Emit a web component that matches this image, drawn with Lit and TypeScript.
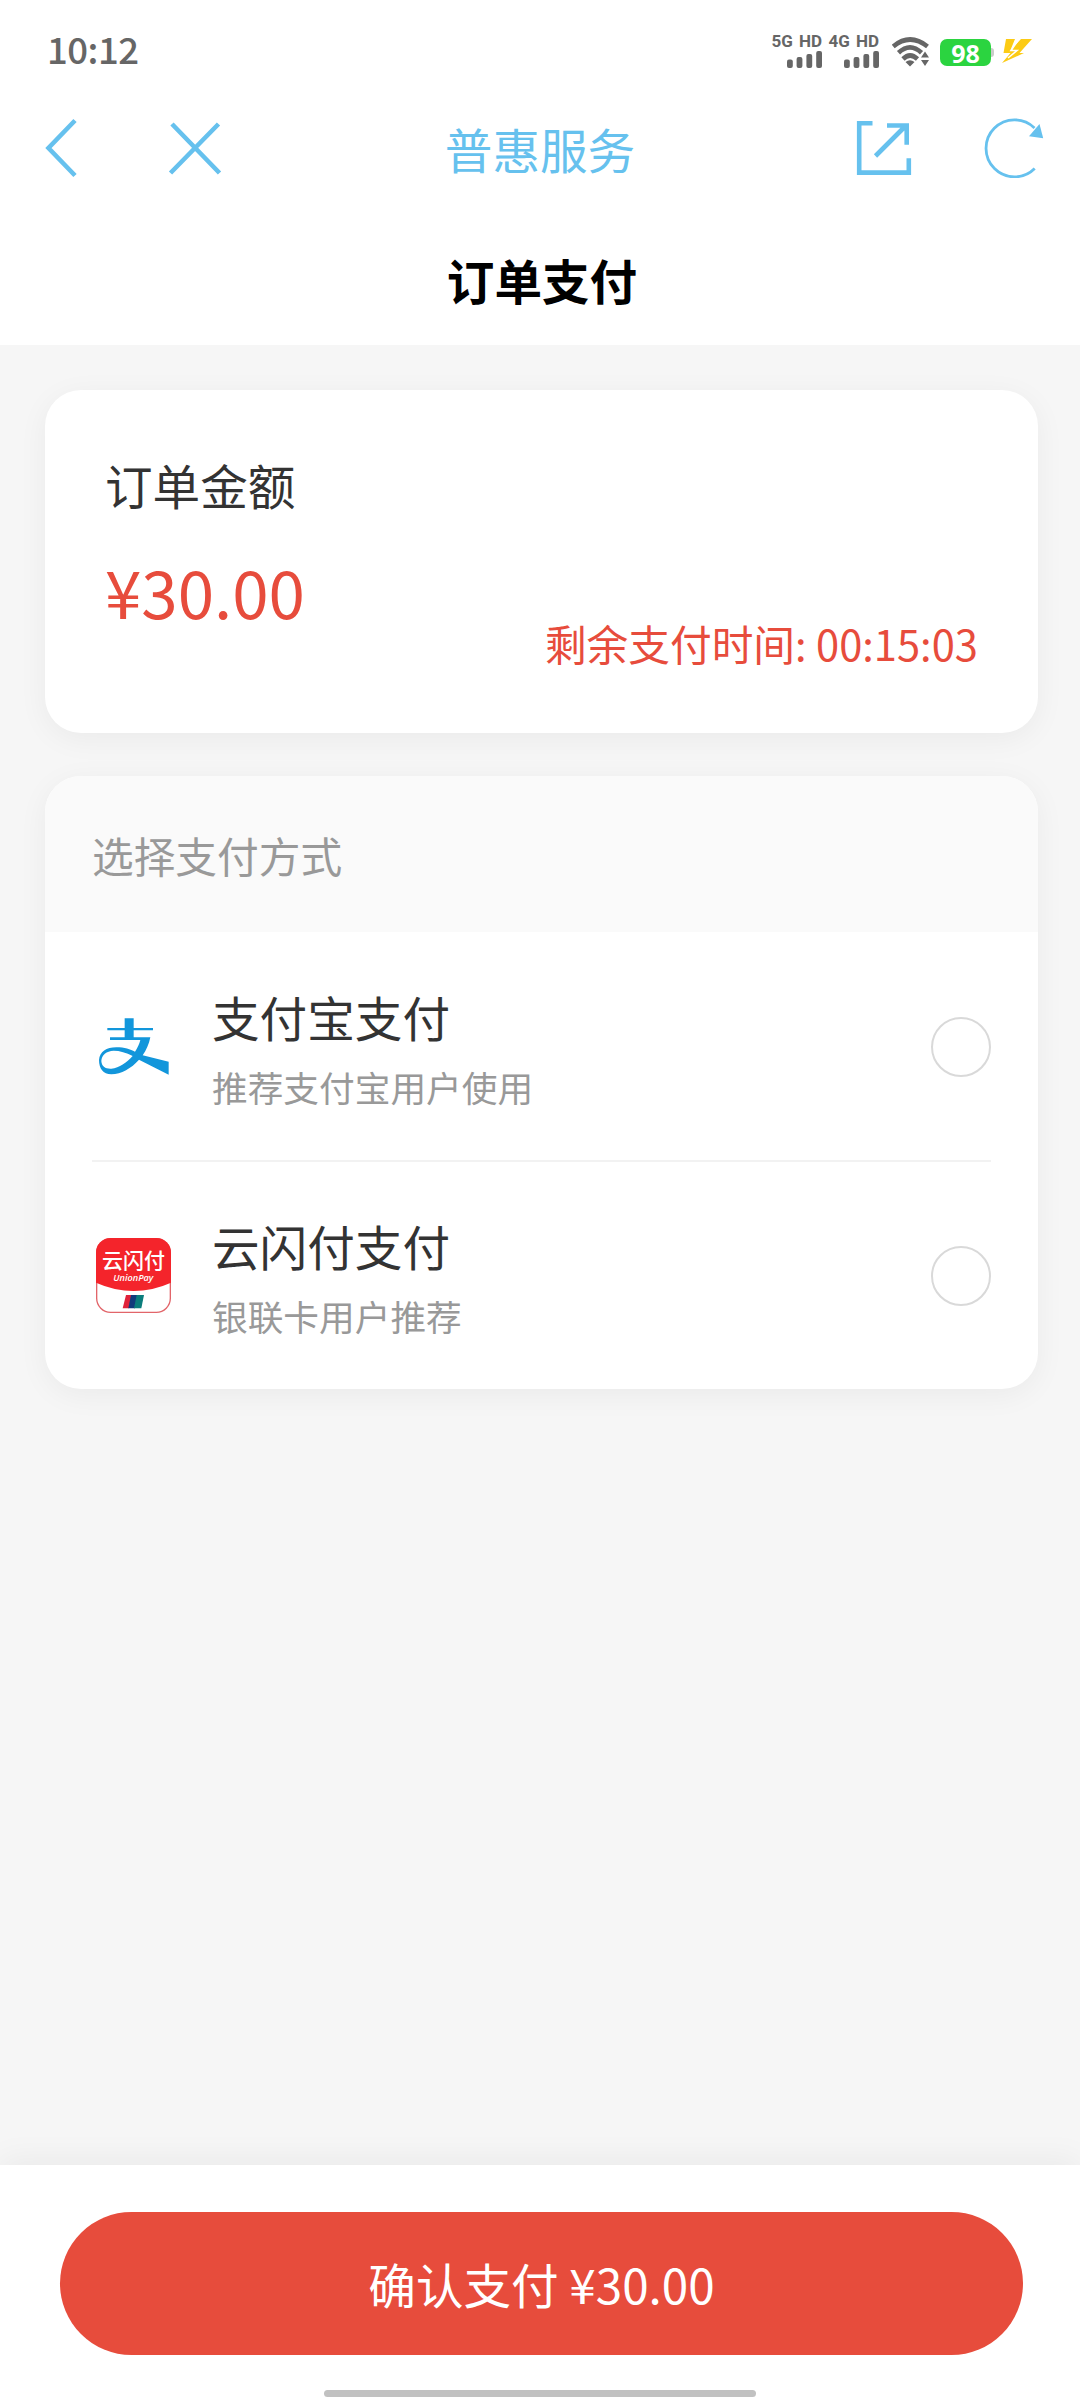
import { LitElement, html, css, svg } from "lit";
import { customElement, property } from "lit/decorators.js";

const signal = svg`
  <rect x="0" y="8.5" width="5.8" height="8.500" rx="2"/>
  <rect x="9.6" y="6" width="5.8" height="11" rx="2"/>
  <rect x="19.4" y="3" width="5.8" height="14" rx="2"/>
  <rect x="29.2" y="0" width="5.8" height="17" rx="2"/>`;

const alipayLogo = html`<svg width="75" height="75" viewBox="109 147 225 225">
  <path fill="#1296db" fill-rule="evenodd" d="M195 175H222V204H280V211H222V232H272C268 252 260 270 249 286L327 305V344L238 299C215 325 185 342 155 343C130 343 118 325 118 300C120 275 140 262 170 262C195 262 212 268 226 275C234 263 239 252 242 240H151V232H195V211H143V204H195ZM219 288C200 278 180 272 162 272C140 273 126 285 125 303C126 320 138 327 155 326C180 324 200 308 219 288Z"/>
</svg>`;

const unionLogo = html`<svg width="75" height="75" viewBox="109 174 225 225">
  <defs><clipPath id="tile"><rect x="109" y="174" width="225" height="225" rx="44"/></clipPath></defs>
  <rect x="111" y="176" width="221" height="221" rx="42" fill="#fff" stroke="#e2656a" stroke-width="4"/>
  <path clip-path="url(#tile)" fill="#f4242b" d="M109 174H334V308Q222 358 109 308Z"/>
  <text x="221.5" y="265" text-anchor="middle" font-family="'Noto Sans CJK SC', sans-serif" font-size="63" font-weight="500" fill="#fff">云闪付</text>
  <text x="221" y="304" text-anchor="middle" font-family="'Open Sans', sans-serif" font-size="27" font-style="italic" font-weight="600" textLength="120" lengthAdjust="spacingAndGlyphs" fill="#fff">UnionPay</text>
  <path fill="#e0223a" d="M199 345H216L208 385H189Z"/>
  <path fill="#123a7c" d="M214 345H234L226 385H206Z"/>
  <path fill="#0b7d7c" d="M231 345H253L245 385H223Z"/>
</svg>`;

@customElement("status-bar")
class StatusBar extends LitElement {
  static styles = css`
    :host { display: flex; justify-content: space-between; align-items: center; height: 102px; box-sizing: border-box; padding: 0 47px 0 47px; color: #666; }
    .time { font-size: 36.500px; line-height: 44px; letter-spacing: -0.5px; font-weight: 500; font-family: "Noto Sans CJK SC", sans-serif; margin-top: -4px; }
    .icons { display: flex; align-items: center; }
    .cell { display: flex; flex-direction: column; align-items: flex-end; width: 48px; margin: -2px 9px 0 0; }
    .net { font: 700 17px/17px Roboto, sans-serif; white-space: nowrap; word-spacing: 2px; margin-bottom: 1px; }
    svg { display: block; fill: currentColor; }
    .wifi { margin: 2px 11px 0 4px; }
    .battery { width: 51px; height: 27px; border-radius: 7px; background: #2bd440; color: #fff; font: 700 25px/28px "Open Sans", sans-serif; text-align: center; margin-top: 3px; }
    .tip { width: 3px; height: 9px; border-radius: 0 3px 3px 0; background: #c9cdc9; margin-top: 3px; }
    .bolt { margin: 0 0 0 8px; }
  `;
  render() {
    return html`
      <span class="time">10:12</span>
      <div class="icons">
        ${["5G HD", "4G HD"].map((n) => html`<div class="cell"><span class="net">${n}</span>
          <svg width="35" height="17" viewBox="0 0 35 17">${signal}</svg></div>`)}
        <svg class="wifi" width="37" height="30" viewBox="0 0 37 30">
          <g fill="none" stroke="currentColor" stroke-width="4.6">
            <path d="M1.200 9.500Q18 -4.500 35.500 9.500"/>
            <path d="M6.500 15.800Q18 5 29.500 15.800"/>
            <path d="M11 22Q18 15 25.500 22"/>
          </g>
          <path d="M13.500 25Q18 21.500 22.500 25L18 29.500ZM33 14.500L37 20.500H29ZM29 23H37L33 29Z"/>
        </svg>
        <span class="battery">98</span><span class="tip"></span>
        <svg class="bolt" width="31" height="26" viewBox="0 0 31 26">
          <path fill="#fccb14" d="M4 1H13L8.500 12L19 1H30L17.500 15H22L0 25L8.500 15H1.500Z"/>
          <path stroke="#fff" stroke-width="1.600" fill="none" d="M17 1L9 12.500H15L6 20"/>
        </svg>
      </div>`;
  }
}

@customElement("nav-bar")
class NavBar extends LitElement {
  static styles = css`
    :host { display: grid; grid-template-columns: 1fr auto 1fr; align-items: center; height: 93px; color: #66c1ee; }
    .left, .right { display: flex; align-items: center; }
    .left { padding-left: 40px; gap: 81px; }
    .right { justify-content: flex-end; padding-right: 30px; gap: 60px; }
    .name { font-size: 47.600px; line-height: 60px; }
    svg { display: block; fill: none; stroke: currentColor; stroke-width: 4.6; margin-top: -1px; }
    .thin { stroke-width: 2.800; }
  `;
  render() {
    return html`
      <div class="left">
        <svg width="44" height="60" viewBox="40 118 44 60"><path d="M75 120.500L48.500 148L75 175.500"/></svg>
        <svg width="60" height="60" viewBox="166 118 60 60"><path d="M173 124L220.500 173M219.500 124L171.500 173"/></svg>
      </div>
      <div class="name">普惠服务</div>
      <div class="right">
        <svg width="66" height="60" viewBox="852 118 66 60"><path d="M872.500 123.300H859.200V172.600H908.800V158.300M887 125.500H906.700V144.800M906 125.500L875.500 156"/></svg>
        <svg class="thin" width="72" height="60" viewBox="978 118 72 60">
          <path d="M1034.700 168.500A28.500 28.500 0 1 1 1034.500 128"/>
          <path fill="currentColor" stroke="none" d="M1039.500 124L1043.200 138.200L1029 136.200Z"/>
        </svg>
      </div>`;
  }
}

@customElement("pay-option")
class PayOption extends LitElement {
  @property() name = "";
  @property() hint = "";
  @property({ attribute: false }) logo: unknown;
  static styles = css`
    :host { display: flex; align-items: center; height: 228px; margin: 0 47px; padding-left: 4px; }
    svg { display: block; }
    .text { flex: 1; display: flex; flex-direction: column; gap: 15px; margin: 2px 0 0 41px; }
    .name { font-size: 47.600px; line-height: 64px; color: #333; }
    .hint { font-size: 35.700px; line-height: 46px; color: #999; }
    .radio { width: 60px; height: 60px; box-sizing: border-box; border: 2px solid #d9d9d9; border-radius: 50%; margin-top: 1px; }
  `;
  render() {
    return html`${this.logo}
      <div class="text"><span class="name">${this.name}</span><span class="hint">${this.hint}</span></div>
      <span class="radio"></span>`;
  }
}

@customElement("app-root")
class AppRoot extends LitElement {
  static styles = css`
    :host { display: flex; flex-direction: column; height: 2400px; width: 1080px; background: #f6f6f6; font-family: "Noto Sans CJK SC", sans-serif; overflow: hidden; }
    .top { background: #fff; height: 345px; }
    .title { text-align: center; font-size: 47.600px; line-height: 60px; font-weight: 700; color: #000; margin-top: 55px; padding-left: 4px; }
    .main { flex: 1; display: flex; flex-direction: column; gap: 43px; padding: 45px 42px 0 45px; }
    .card { background: #fff; border-radius: 36px; box-shadow: 0 6px 30px rgba(0, 0, 0, 0.05); }
    .amount { height: 343px; box-sizing: border-box; padding: 65px 60px 0; display: flex; flex-direction: column; }
    .label { font-size: 47.600px; line-height: 60px; color: #333; }
    .price { font-size: 65.500px; line-height: 80px; color: #e74c3c; margin-top: 36px; }
    .timer { font-size: 41.700px; line-height: 60px; color: #e74c3c; align-self: flex-end; margin-top: -18px; }
    .methods { overflow: hidden; }
    .head { height: 156px; background: #fafafa; padding-left: 47px; font-size: 41.700px; line-height: 158px; color: #999; }
    .line { height: 2px; background: #f2f2f2; margin: 0 47px; margin-bottom: -1px; }
    .foot { background: #fff; height: 235px; box-shadow: 0 -6px 30px rgba(0, 0, 0, 0.05); display: flex; flex-direction: column; align-items: center; }
    .pay { align-self: stretch; margin: 47px 57px 0 60px; height: 143px; border: 0; padding: 0; border-radius: 72px; background: #e74c3c; color: #fff; font-family: inherit; font-size: 47.600px; line-height: 143px; text-align: center; }
    .home { width: 432px; height: 7px; border-radius: 4px; background: #c1c1c1; margin-top: 35px; }
  `;
  render() {
    return html`
      <div class="top">
        <status-bar></status-bar>
        <nav-bar></nav-bar>
        <div class="title">订单支付</div>
      </div>
      <div class="main">
        <div class="card amount">
          <span class="label">订单金额</span>
          <span class="price">¥30.00</span>
          <span class="timer">剩余支付时间: 00:15:03</span>
        </div>
        <div class="card methods">
          <div class="head">选择支付方式</div>
          <pay-option name="支付宝支付" hint="推荐支付宝用户使用" .logo=${alipayLogo}></pay-option>
          <div class="line"></div>
          <pay-option name="云闪付支付" hint="银联卡用户推荐" .logo=${unionLogo}></pay-option>
        </div>
      </div>
      <div class="foot">
        <button class="pay">确认支付 ¥30.00</button>
        <span class="home"></span>
      </div>`;
  }
}
